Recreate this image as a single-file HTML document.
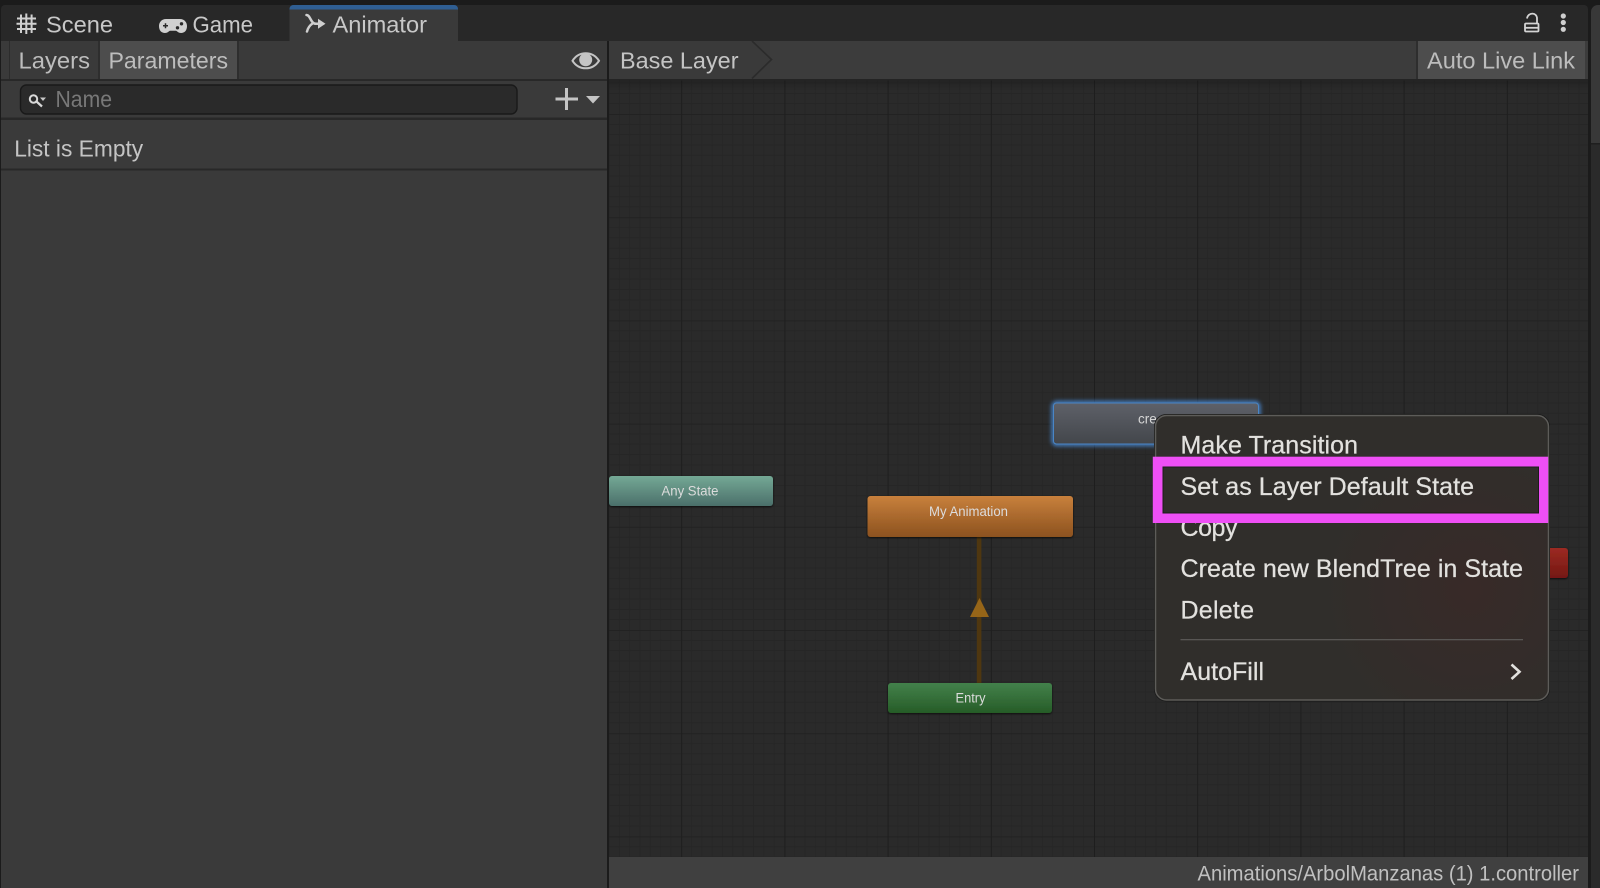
<!DOCTYPE html>
<html><head><meta charset="utf-8"><title>Animator</title>
<style>
html,body{margin:0;padding:0;background:#1b1b1b;width:1600px;height:888px;overflow:hidden}
svg{display:block;font-family:"Liberation Sans",sans-serif}
</style></head><body>
<svg width="1600" height="888" viewBox="0 0 1600 888" xmlns="http://www.w3.org/2000/svg">
<defs>
<pattern id="grid" x="609" y="79" width="103.2" height="103.2" patternUnits="userSpaceOnUse" patternTransform="translate(72.2 35)">
<rect width="103.2" height="103.2" fill="#2a2a2a"/>
<g stroke="#262626" stroke-width="1">
<path d="M10.3 0V103.2M20.6 0V103.2M31 0V103.2M41.3 0V103.2M51.6 0V103.2M61.9 0V103.2M72.2 0V103.2M82.6 0V103.2M92.9 0V103.2"/>
<path d="M0 10.3H103.2M0 20.6H103.2M0 31H103.2M0 41.3H103.2M0 51.6H103.2M0 61.9H103.2M0 72.2H103.2M0 82.6H103.2M0 92.9H103.2"/>
</g>
<path d="M0 .5H103.2" stroke="#222222" stroke-width="1"/>
<path d="M.5 0V103.2" stroke="#1e1e1e" stroke-width="1"/>
</pattern>
<linearGradient id="shadow" x1="0" y1="0" x2="0" y2="1"><stop offset="0" stop-color="#000" stop-opacity=".18"/><stop offset="1" stop-color="#000" stop-opacity="0"/></linearGradient>
<linearGradient id="gAny" x1="0" y1="0" x2="0" y2="1"><stop offset="0" stop-color="#74a995"/><stop offset="1" stop-color="#4b6f6a"/></linearGradient>
<linearGradient id="gAnim" x1="0" y1="0" x2="0" y2="1"><stop offset="0" stop-color="#c8803c"/><stop offset="1" stop-color="#8c521f"/></linearGradient>
<linearGradient id="gEntry" x1="0" y1="0" x2="0" y2="1"><stop offset="0" stop-color="#43814b"/><stop offset="1" stop-color="#265c27"/></linearGradient>
<linearGradient id="gSel" x1="0" y1="0" x2="0" y2="1"><stop offset="0" stop-color="#5e6169"/><stop offset="1" stop-color="#43464b"/></linearGradient>
<linearGradient id="gExit" x1="0" y1="0" x2="0" y2="1"><stop offset="0" stop-color="#9c2a22"/><stop offset="1" stop-color="#741813"/></linearGradient>
<radialGradient id="tint" gradientUnits="userSpaceOnUse" cx="1470" cy="590" r="150"><stop offset="0" stop-color="#382a28"/><stop offset="1" stop-color="#302e2b"/></radialGradient>
<filter id="glow" x="-10%" y="-30%" width="120%" height="160%"><feGaussianBlur stdDeviation="2"/></filter>
<filter id="nodeShadow" x="-5%" y="-10%" width="110%" height="130%"><feDropShadow dx="0" dy="1" stdDeviation="1" flood-color="#000" flood-opacity=".7"/></filter>
</defs>

<rect width="1600" height="888" fill="#1b1b1b"/>

<!-- tab strip -->
<path d="M1 9a4 4 0 0 1 4-4H1584a4 4 0 0 1 4 4V41H1Z" fill="#282828"/>
<!-- right neighbouring panel -->
<path d="M1591 12a7 7 0 0 1 7-7H1600V888H1591Z" fill="#383838"/>
<rect x="1591" y="143" width="9" height="1.5" fill="#1f1f1f"/>
<rect x="1591" y="144.5" width="9" height="744" fill="#2a2a2a"/>

<!-- Animator tab -->
<path d="M289.5 9a4 4 0 0 1 4-4H454a4 4 0 0 1 4 4V41H289.5Z" fill="#3a3a3a"/>
<path d="M289.5 9a4 4 0 0 1 4-4H454a4 4 0 0 1 4 4V9.5H289.5Z" fill="#2f5e92"/>

<!-- Left panel -->
<rect x="1" y="41" width="606" height="847" fill="#3a3a3a"/>
<rect x="9" y="41" width="1" height="38" fill="#2c2c2c"/>
<rect x="98" y="41" width="2" height="38" fill="#2e2e2e"/>
<rect x="100" y="41" width="137" height="38" fill="#4d4d4d"/>
<rect x="237" y="41" width="2" height="38" fill="#2e2e2e"/>
<rect x="1" y="79" width="606" height="2" fill="#282828"/>
<rect x="20.5" y="85" width="496.5" height="29" rx="6" fill="#2a2a2a" stroke="#191919" stroke-width="1.4"/>
<rect x="1" y="117.5" width="606" height="2.5" fill="#282828"/>
<rect x="1" y="168.5" width="606" height="2" fill="#282828"/>

<!-- Graph -->
<rect x="609" y="79" width="979" height="778" fill="url(#grid)"/>
<rect x="609" y="79" width="979" height="12" fill="url(#shadow)"/>

<!-- Top toolbar right -->
<rect x="609" y="41" width="979" height="38" fill="#3c3c3c"/>
<rect x="609" y="41" width="161" height="38" fill="#3a3a3a"/>
<path d="M752 41 771.500 59.500 752 78.500" fill="none" stroke="#2b2b2b" stroke-width="1.600"/>
<rect x="1416" y="41" width="2" height="38" fill="#2e2e2e"/>
<rect x="1418" y="41" width="167" height="38" fill="#4d4d4d"/>
<rect x="609" y="79" width="979" height="1.500" fill="#242424"/>

<!-- Status bar -->
<rect x="609" y="857" width="979" height="31" fill="#404040"/>

<!-- Transition -->
<rect x="976.800" y="537" width="4.600" height="146" fill="#4f3710"/>
<path d="M979.500 598 970 617H989Z" fill="#966518"/>

<!-- Nodes -->
<g filter="url(#nodeShadow)">
<rect x="609" y="476" width="164" height="30" rx="3" fill="url(#gAny)"/>
<rect x="867.500" y="496" width="205.500" height="41" rx="3" fill="url(#gAnim)"/>
<rect x="888" y="683" width="164" height="30" rx="3" fill="url(#gEntry)"/>
<rect x="1502" y="548" width="66" height="30" rx="3" fill="url(#gExit)"/>
</g>
<rect x="1053.500" y="403" width="205" height="41" rx="3" fill="none" stroke="#4b93e6" stroke-width="3.500" filter="url(#glow)"/>
<rect x="1053.500" y="403" width="205" height="41" rx="3" fill="url(#gSel)" stroke="#4a86c6" stroke-width="1"/>

<g fill="#dcdcdc" style="font-size:13.500px">
<text x="661.500" y="495.500" textLength="57" lengthAdjust="spacingAndGlyphs">Any State</text>
<text x="929" y="516" textLength="79" lengthAdjust="spacingAndGlyphs">My Animation</text>
<text x="955.500" y="702.500" textLength="30" lengthAdjust="spacingAndGlyphs">Entry</text>
<text x="1138" y="423.500" fill="#d6d6d6">cre</text>
</g>

<!-- Context menu -->
<rect x="1154.500" y="414.500" width="395" height="286.500" rx="12" fill="#302e2b" stroke="#191919" stroke-width="1"/>
<rect x="1155.500" y="415.500" width="393" height="284.500" rx="11" fill="url(#tint)" stroke="#5d5c59" stroke-width="1.500"/>
<g fill="#e2e1de" stroke="#e2e1de" stroke-width=".25" style="font-size:25px">
<text x="1180.500" y="453.600" textLength="177.500" lengthAdjust="spacing">Make Transition</text>
<text x="1180.500" y="536" textLength="57" lengthAdjust="spacing">Copy</text>
</g>
<rect x="1157.800" y="461.700" width="385.400" height="56.300" fill="none" stroke="#ee4ff5" stroke-width="10"/>
<rect x="1163" y="467" width="375.500" height="46" fill="none" stroke="#1d1c1b" stroke-width="1"/>
<g fill="#e2e1de" stroke="#e2e1de" stroke-width=".25" style="font-size:25px">
<text x="1180.500" y="495" textLength="293.500" lengthAdjust="spacing">Set as Layer Default State</text>
<text x="1180.500" y="577" textLength="342.500" lengthAdjust="spacing">Create new BlendTree in State</text>
<text x="1180.500" y="618.300" textLength="73.500" lengthAdjust="spacing">Delete</text>
<text x="1180.500" y="680" textLength="83.500" lengthAdjust="spacing">AutoFill</text>
</g>
<rect x="1180.500" y="639" width="342.500" height="1.300" fill="#585654"/>
<path d="M1511.500 664.500 1519.500 671.800 1511.500 679" fill="none" stroke="#e2e1de" stroke-width="2.600"/>

<!-- Tab text -->
<g fill="#c8c8c8" style="font-size:23px">
<text x="46" y="32.500" textLength="67" lengthAdjust="spacingAndGlyphs">Scene</text>
<text x="192.500" y="32.500" textLength="60.500" lengthAdjust="spacingAndGlyphs">Game</text>
<text x="332.500" y="32.500" textLength="94.500" lengthAdjust="spacingAndGlyphs">Animator</text>
<text x="18.500" y="68.300" textLength="71.500" lengthAdjust="spacingAndGlyphs" fill="#bdbdbd">Layers</text>
<text x="108.500" y="68.300" textLength="119.500" lengthAdjust="spacingAndGlyphs" fill="#bdbdbd">Parameters</text>
<text x="620" y="68.300" textLength="118.500" lengthAdjust="spacingAndGlyphs" fill="#c4c4c4">Base Layer</text>
<text x="1427" y="68.300" textLength="148" lengthAdjust="spacingAndGlyphs" fill="#bdbdbd">Auto Live Link</text>
<text x="55.500" y="107" textLength="56.500" lengthAdjust="spacingAndGlyphs" fill="#787878">Name</text>
<text x="14.200" y="156.500" textLength="129" lengthAdjust="spacingAndGlyphs" fill="#c4c4c4">List is Empty</text>
</g>
<text x="1197.500" y="880.700" textLength="381.500" lengthAdjust="spacingAndGlyphs" fill="#c0c0c0" style="font-size:21px">Animations/ArbolManzanas (1) 1.controller</text>

<!-- Icons -->
<!-- Scene grid -->
<g stroke="#cfcfcf" stroke-width="2" fill="none">
<path d="M21 14.500V33M26.300 13.500V34M31.600 14.500V33"/>
<path d="M17 18.500H36M16.500 23.700H36.500M17 29H36"/>
</g>
<!-- Game pad -->
<path d="M166 19H180C184.500 19 187 22.500 187 26 187 30.500 184.500 33 181 33 178.500 33 177.500 31.500 176 30.800H170C168.500 31.500 167.500 33 165 33 161.500 33 159 30.500 159 26 159 22.500 161.500 19 166 19Z" fill="#d0d0d0"/>
<path d="M163 25.800H168M165.500 23.300V28.300" stroke="#282828" stroke-width="1.500"/>
<circle cx="181.500" cy="23.800" r="1.700" fill="#282828"/><circle cx="177.500" cy="27.800" r="1.700" fill="#282828"/>
<!-- Animator merge arrow -->
<g fill="none" stroke="#cfcfcf" stroke-width="2.500" stroke-linecap="round">
<path d="M306.500 15C310.500 15 310.500 23.800 316 23.800H323"/>
<path d="M307 31.500C308 27.500 309.500 25.500 312.500 23.500"/>
</g>
<path d="M318 18.800 325.500 23.800 318 28.800Z" fill="#cfcfcf"/>
<!-- Lock -->
<g fill="none" stroke="#d4d4d4" stroke-width="1.800">
<rect x="1525" y="23.500" width="13.500" height="8" rx="1"/>
<path d="M1527 18.500C1528 12 1537 12 1537 18.500V23.500"/>
<path d="M1525 27.800H1538.500" stroke-width="1.800"/>
</g>
<!-- Dots -->
<g fill="#cfcfcf"><circle cx="1563.300" cy="16" r="2.600"/><circle cx="1563.300" cy="22.500" r="2.600"/><circle cx="1563.300" cy="29.300" r="2.600"/></g>
<!-- Eye -->
<path d="M572.500 60.800C579 50.800 592.500 50.800 599 60.800 592.500 70.800 579 70.800 572.500 60.800Z" fill="none" stroke="#c4c4c4" stroke-width="2"/>
<circle cx="585.700" cy="59.800" r="6.500" fill="#c4c4c4"/>
<!-- Search -->
<circle cx="33.500" cy="99" r="3.700" fill="none" stroke="#d8d8d8" stroke-width="2"/>
<path d="M36.500 101.500 42 106.500" stroke="#d8d8d8" stroke-width="2.200"/>
<path d="M40 97.500H46L43 101Z" fill="#c8c8c8"/>
<!-- Plus + dropdown -->
<path d="M566.500 88V110M555.500 99H578" stroke="#c4c4c4" stroke-width="3"/>
<path d="M586 96H600L593 103.500Z" fill="#c4c4c4"/>
</svg>
</body></html>
